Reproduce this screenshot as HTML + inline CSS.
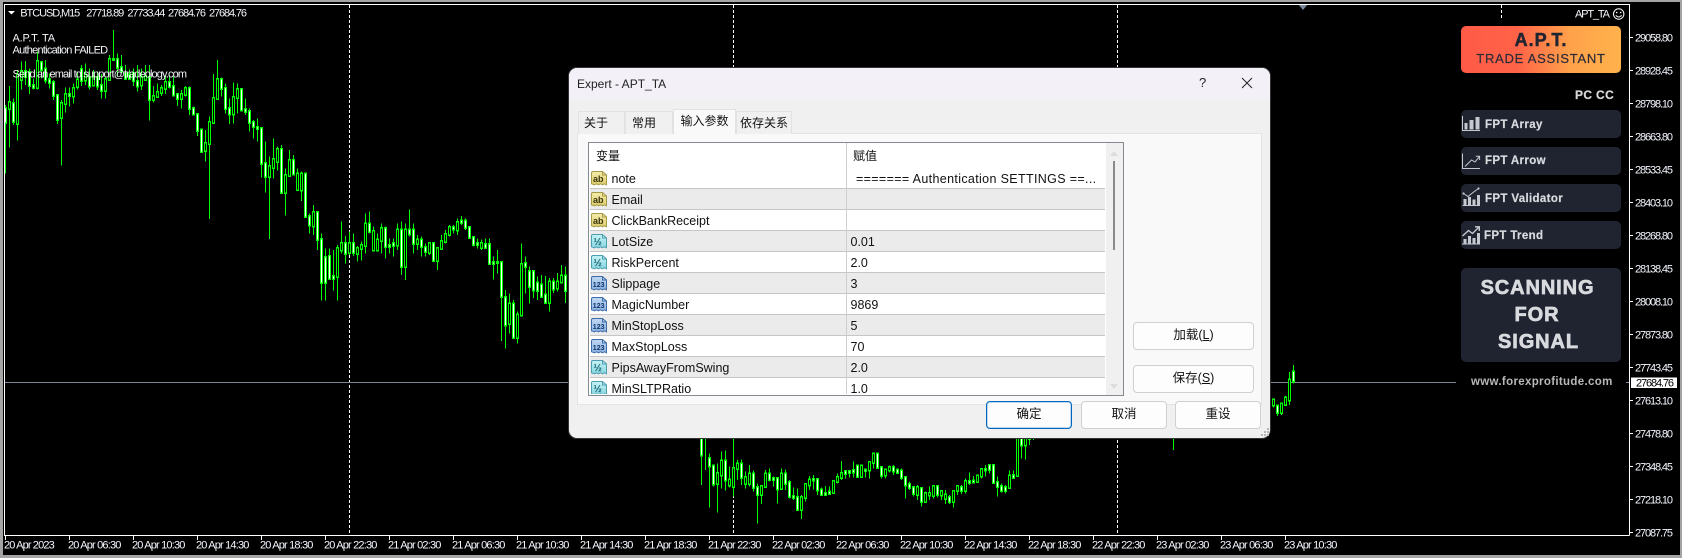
<!DOCTYPE html>
<html><head><meta charset="utf-8"><title>APT_TA</title>
<style>
html,body{margin:0;padding:0;background:#000;width:1682px;height:558px;overflow:hidden}
#r{position:relative;width:1682px;height:558px;overflow:hidden;background:#000;font-family:"Liberation Sans","Noto Sans CJK SC",sans-serif}
svg{display:block}
#c{position:absolute;left:0;top:0}
#c text{font-family:"Liberation Sans",sans-serif;font-size:11px}
.a{position:absolute;box-sizing:border-box}
.t{position:absolute;white-space:nowrap;line-height:16px;color:#111;font-size:12.5px}
.cj{font-size:12px}
#d{position:absolute;left:569px;top:68px;width:701px;height:370px;background:#f0f0f0;border-radius:8px;overflow:hidden;box-shadow:0 0 0 1px #333}
.tab{position:absolute;box-sizing:border-box;top:110.5px;height:23px;background:#f0f0f0;border:1px solid #e2e2e2;border-bottom:0;font-size:12px;color:#111;line-height:22px;padding-left:5px;white-space:nowrap}
.row{position:absolute;left:590px;width:515px;height:20px}
.g{background:#ebebeb}
.ln{position:absolute;left:590px;width:515px;height:1px;background:#c6c6c6}
.ic{position:absolute;left:591px;width:16px;height:15px}
.ic text{font-family:"Liberation Sans",sans-serif;font-size:9px;font-weight:bold}
.btn{position:absolute;box-sizing:border-box;background:#fdfdfd;border:1px solid #d0d0d0;border-radius:4px;text-align:center;font-size:12.5px;color:#111;line-height:25px}
.pn{position:absolute;left:1461px;width:160px;background:#1f2430;border-radius:5px}
.pt{position:absolute;white-space:nowrap;color:#d8dade;font-weight:bold;font-size:11.5px;letter-spacing:.35px;line-height:14px;-webkit-text-stroke:.2px #d8dade}
</style></head><body><div id="r">

<svg id="c" width="1682" height="558" viewBox="0 0 1682 558">
<defs>
<path id="w1" vector-effect="non-scaling-stroke" d="M0 325V368M2 310V365M5 215V230M6 218V257M7 257V262M9 187V208M10 207V240M11 238V248M12 248V287M13 287V358M16 283V287M19 208V242M21 232V258M23 232V258M24 256V272M27 178V179M28 178V203M29 203V213M30 222V235M31 225V235M32 220V242M33 245V258M36 232V298M41 248V260M42 260V285M43 284V296M46 265V325M47 325V342M48 344V392M49 390V455M54 238V265M55 265V325M56 325V342M59 268V330M60 328V334M61 334V368M62 368V380M63 382V386M64 385V490M65 490V530M69 448V578M72 482V522M75 522V650M76 650V675M78 637V718M79 718V848M80 772V848M81 770V835M82 830V835M85 730V760M87 730V758M91 672V695M95 685V740M96 737V740M97 730V737M99 690V800M101 690V702M102 690V730M104 720V740M105 742V755M107 730V782M112 682V687M114 663V667M115 663V683M116 683V712M117 712V733M118 731V733M120 733V742M121 733V790M122 787V790M123 787V788M124 787V890M125 892V975M127 912V1012M130 790V800M131 815V860M132 815V870M133 849V872M134 855V890M135 885V908M137 846V867M140 828V872"/>
<path id="b1" vector-effect="non-scaling-stroke" d="M1 308V325M3 225V370M4 215V238M8 185V262M14 310V352M15 283V310M17 265V288M18 240V260M20 225V240M22 232V255M25 238V272M26 178V238M34 232V255M35 230V238M37 290V298M38 278V290M39 265V278M40 248V265M44 284V296M45 265V284M50 430V452M51 368V430M52 295V368M53 238V295M57 292V342M58 268V292M66 500V530M67 478V503M68 448V485M70 526V578M71 482V526M73 522V568M74 522V570M77 637V678M83 745V830M84 730V750M86 730V758M88 745V760M89 737V745M90 672V737M92 695V750M93 720V750M94 685V722M98 690V735M100 690V800M103 720V730M106 730V758M108 745V782M109 725V745M110 703V725M111 682V703M113 667V690M119 731V742M126 912V970M128 945V1012M129 793V945M136 846V908M138 846V864M139 828V846"/>
<path id="w2" vector-effect="non-scaling-stroke" d="M0 113V165M2 175V198M3 198V252M6 183V240M10 192V232M13 222V262M14 262V283M17 222V238M18 235V238M19 235V267M21 222V250M22 248V290M23 290V292M24 292V328M28 238V240M29 238V270M30 270V283M31 280V283M32 276V280M36 215V220M37 215V217M38 212V216M39 198V230M41 210V211M44 162V203M45 203V227M48 203V213M49 210V218M50 213V232M51 233V255M52 253V262M53 262V280M55 265V305M59 260V283M62 293V305M65 262V272M67 245V248M68 243V246M71 208V210M72 197V208M73 197V248M74 248V260M75 260V272M76 262V272M78 227V232M80 113V135M82 113V115M144 18V37M148 -84V-57"/>
<path id="b2" vector-effect="non-scaling-stroke" d="M4 220V250M5 183V225M7 240V255M8 205V260M9 192V205M11 232V250M12 222V250M15 260V283M16 222V260M20 222V265M25 292V328M26 253V292M27 240V255M33 245V278M34 232V245M35 220V232M40 198V230M42 187V210M43 162V187M46 210V225M47 203V210M54 263V283M56 280V305M57 280V285M58 260V287M60 275V285M61 285V295M63 275V305M64 260V272M66 245V272M69 228V245M70 208V228M77 228V262M79 113V227M81 113V135M143 0V15M145 12V37M146 -6V14M147 -60V0"/>
</defs>

<rect width="1682" height="558" fill="#000"/>
<rect x="0" y="0" width="1682" height="2" fill="#a4a4a4"/>
<rect x="0" y="0" width="3" height="558" fill="#a4a4a4"/>
<rect x="0" y="555" width="1682" height="3" fill="#a4a4a4"/>
<rect x="1680" y="0" width="2" height="558" fill="#a4a4a4"/>

<g stroke="#fff" stroke-width="1" stroke-dasharray="3 2" fill="none" shape-rendering="crispEdges">
<path d="M349.5 5V535M733.5 5V535M1117.5 5V535M1501.5 5V19"/>
</g>
<path d="M5 382.5H1456M1626 382.5H1629" stroke="#778899" stroke-width="1" shape-rendering="crispEdges"/>

<g transform="translate(5.5,0) scale(4,.33333)" fill="none" shape-rendering="crispEdges">
<path vector-effect="non-scaling-stroke" stroke="#00ff00" stroke-width="1" d="M0 315V520M1 258V443M2 295V375M3 210V422M4 185V268M5 183V255M6 205V282M7 235V268M8 155V268M9 183V235M10 180V250M11 220V265M12 240V300M13 283V372M14 300V497M15 262V338M16 262V320M17 250V310M18 215V268M19 195V258M20 190V255M21 205V268M22 210V258M23 215V270M24 222V295M25 230V295M26 165V240M27 90V180M28 160V230M29 165V220M30 195V240M31 208V235M32 205V258M33 195V275M34 205V270M35 195V240M36 195V362M37 258V308M38 250V290M39 255V288M40 228V282M41 225V265M42 230V285M43 280V318M44 270V325M45 258V290M46 260V345M47 320V345M48 340V408M49 385V455M50 390V485M51 350V657M52 222V368M53 180V295M54 232V290M55 250V340M56 295V372M57 248V370M58 250V340M59 265V332M60 295V345M61 325V395M62 360V415M63 355V425M64 385V532M65 425V578M66 470V717M67 415V535M68 440V512M69 435V578M70 505V647M71 450V528M72 465V522M73 505V570M74 515V603M75 518V650M76 640V700M77 615V705M78 635V750M79 700V902M80 745V902M81 745V840M82 750V872M83 735V902M84 665V760M85 708V790M86 695V765M87 700V768M88 738V785M89 725V782M90 640V760M91 635V700M92 680V755M93 700V755M94 670V760M95 680V775M96 715V760M97 715V770M98 670V750M99 665V825M100 670V840M101 628V710M102 670V760M103 705V750M104 710V770M105 730V770M106 728V765M107 730V785M108 745V810M109 705V750M110 690V730M111 675V710M112 675V700M113 655V705M114 648V675M115 655V690M116 680V715M117 710V740M118 715V745M119 718V750M120 715V745M121 715V795M122 770V838M123 750V820M124 785V1023M125 870V1045M126 880V1000M127 900V1013M128 935V1030M129 730V948M130 770V880M131 800V910M132 810V894M133 830V900M134 825V894M135 828V909M136 834V935M137 834V879M138 819V875M139 795V849M140 800V909"/>
<use href="#w1" stroke="#00ff00" stroke-width="3" stroke-linecap="square"/>
<use href="#b1" stroke="#00ff00" stroke-width="3" stroke-linecap="square"/>
<use href="#w1" stroke="#ffffff" stroke-width="1"/>
<use href="#b1" stroke="#000000" stroke-width="1"/>
</g>

<g transform="translate(701.5,400) scale(4,.33333)" fill="none" shape-rendering="crispEdges">
<path vector-effect="non-scaling-stroke" stroke="#00ff00" stroke-width="1" d="M0 113V255M1 113V210M2 160V322M3 195V260M4 190V338M5 155V265M6 152V272M7 200V262M8 113V290M9 180V240M10 178V255M11 215V265M12 195V260M13 212V275M14 250V370M15 255V312M16 210V262M17 205V245M18 230V260M19 235V310M20 205V265M21 208V270M22 240V295M23 262V300M24 265V330M25 285V357M26 250V305M27 228V270M28 225V268M29 235V285M30 262V288M31 258V288M32 260V285M33 240V280M34 220V250M35 183V240M36 210V235M37 210V232M38 185V232M39 195V230M40 195V232M41 205V232M42 185V235M43 160V205M44 162V205M45 200V235M46 205V235M47 197V218M48 195V225M49 205V222M50 205V240M51 228V295M52 245V270M53 258V290M54 255V300M55 262V320M56 275V308M57 260V300M58 255V295M59 255V292M60 270V300M61 270V312M62 285V312M63 270V323M64 255V285M65 255V282M66 235V280M67 218V255M68 228V250M69 225V245M70 205V235M71 195V230M72 195V220M73 195V250M74 230V290M75 250V278M76 255V280M77 212V265M78 212V235M79 113V228M80 113V175M81 113V178M82 113V135M83 113V120M118 113V150M143 0V22M144 15V48M145 10V45M146 -12V15M147 -84V15M148 -105V-50"/>
<use href="#w2" stroke="#00ff00" stroke-width="3" stroke-linecap="square"/>
<use href="#b2" stroke="#00ff00" stroke-width="3" stroke-linecap="square"/>
<use href="#w2" stroke="#ffffff" stroke-width="1"/>
<use href="#b2" stroke="#000000" stroke-width="1"/>
</g>

<path d="M1298 4H1308L1303 10Z" fill="#778899"/>

<g shape-rendering="crispEdges" fill="none" stroke="#fff" stroke-width="1">
<path d="M4.5 4.5H1629.5M4.5 4V535.5M4 535.5H1629.5M1629.5 4V535.5"/>
<path d="M1630 37.5H1633M1630 70.5H1633M1630 103.5H1633M1630 136.5H1633M1630 169.5H1633M1630 202.5H1633M1630 235.5H1633M1630 268.5H1633M1630 301.5H1633M1630 334.5H1633M1630 367.5H1633M1630 400.5H1633M1630 433.5H1633M1630 466.5H1633M1630 499.5H1633M1630 532.5H1633"/>
<path d="M5.5 536V540M69.5 536V540M133.5 536V540M197.5 536V540M261.5 536V540M325.5 536V540M389.5 536V540M453.5 536V540M517.5 536V540M581.5 536V540M645.5 536V540M709.5 536V540M773.5 536V540M837.5 536V540M901.5 536V540M965.5 536V540M1029.5 536V540M1093.5 536V540M1157.5 536V540M1221.5 536V540M1285.5 536V540"/>
</g>

<path d="M8 11H15L11.5 14.5Z" fill="#fff"/>
<g fill="#f4f6fa">
<text x="20.3" y="16.5" textLength="60">BTCUSD,M15</text>
<text x="86.2" y="16.5" textLength="38">27718.89</text>
<text x="127.4" y="16.5" textLength="38">27733.44</text>
<text x="168" y="16.5" textLength="38">27684.76</text>
<text x="209" y="16.5" textLength="38">27684.76</text>
<text x="12.5" y="41.5" textLength="42.6">A.P.T. TA</text>
<text x="12.5" y="53.5" textLength="95.6">Authentication FAILED</text>
<text x="12.5" y="77.5" textLength="174.5">Send an email to support@tradeology.com</text>
<text x="1575" y="17.5" textLength="35">APT_TA</text>
</g>
<circle cx="1618.7" cy="14" r="5.2" fill="none" stroke="#fff" stroke-width="1"/>
<circle cx="1616.7" cy="12.5" r=".8" fill="#fff"/><circle cx="1620.7" cy="12.5" r=".8" fill="#fff"/>
<path d="M1615.8 15.3Q1618.7 18.8 1621.6 15.3" fill="none" stroke="#fff" stroke-width=".9"/>

<g fill="#f4f8ff">
<text x="1635" y="41.5" textLength="38">29058.80</text>
<text x="1635" y="74.5" textLength="38">28928.45</text>
<text x="1635" y="107.5" textLength="38">28798.10</text>
<text x="1635" y="140.5" textLength="38">28663.80</text>
<text x="1635" y="173.5" textLength="38">28533.45</text>
<text x="1635" y="206.5" textLength="38">28403.10</text>
<text x="1635" y="239.5" textLength="38">28268.80</text>
<text x="1635" y="272.5" textLength="38">28138.45</text>
<text x="1635" y="305.5" textLength="38">28008.10</text>
<text x="1635" y="338.5" textLength="38">27873.80</text>
<text x="1635" y="371.5" textLength="38">27743.45</text>
<text x="1635" y="404.5" textLength="38">27613.10</text>
<text x="1635" y="437.5" textLength="38">27478.80</text>
<text x="1635" y="470.5" textLength="38">27348.45</text>
<text x="1635" y="503.5" textLength="38">27218.10</text>
<text x="1635" y="536.5" textLength="38">27087.75</text>
</g>
<rect x="1631" y="377.5" width="46" height="10.5" fill="#fff"/>
<text x="1636" y="386.5" textLength="38" fill="#000">27684.76</text>

<g fill="#f4f8ff">
<text x="4" y="548.5" textLength="50.7">20 Apr 2023</text>
<text x="68" y="548.5" textLength="53.4">20 Apr 06:30</text>
<text x="132" y="548.5" textLength="53.4">20 Apr 10:30</text>
<text x="196" y="548.5" textLength="53.4">20 Apr 14:30</text>
<text x="260" y="548.5" textLength="53.4">20 Apr 18:30</text>
<text x="324" y="548.5" textLength="53.4">20 Apr 22:30</text>
<text x="388" y="548.5" textLength="53.4">21 Apr 02:30</text>
<text x="452" y="548.5" textLength="53.4">21 Apr 06:30</text>
<text x="516" y="548.5" textLength="53.4">21 Apr 10:30</text>
<text x="580" y="548.5" textLength="53.4">21 Apr 14:30</text>
<text x="644" y="548.5" textLength="53.4">21 Apr 18:30</text>
<text x="708" y="548.5" textLength="53.4">21 Apr 22:30</text>
<text x="772" y="548.5" textLength="53.4">22 Apr 02:30</text>
<text x="836" y="548.5" textLength="53.4">22 Apr 06:30</text>
<text x="900" y="548.5" textLength="53.4">22 Apr 10:30</text>
<text x="964" y="548.5" textLength="53.4">22 Apr 14:30</text>
<text x="1028" y="548.5" textLength="53.4">22 Apr 18:30</text>
<text x="1092" y="548.5" textLength="53.4">22 Apr 22:30</text>
<text x="1156" y="548.5" textLength="53.4">23 Apr 02:30</text>
<text x="1220" y="548.5" textLength="53.4">23 Apr 06:30</text>
<text x="1284" y="548.5" textLength="53.4">23 Apr 10:30</text>
</g>
</svg>

<!-- right panel -->
<div class="a" style="left:1461px;top:26px;width:160px;height:47px;border-radius:5px;background:linear-gradient(90deg,#ff5a47 0%,#ff6347 35%,#ffa14a 68%,#ffb24c 100%)"></div>
<div class="t" style="left:1461px;width:160px;text-align:center;top:31px;font-size:18px;line-height:18px;font-weight:bold;color:#1f2430;letter-spacing:1px;-webkit-text-stroke:.5px #1f2430">A.P.T.</div>
<div class="t" style="left:1461px;width:160px;text-align:center;top:51px;font-size:13px;line-height:15px;color:#2a2c38;letter-spacing:.75px;-webkit-text-stroke:.2px #2a2c38">TRADE ASSISTANT</div>
<div class="t" style="left:1575px;top:88px;font-size:12px;line-height:14px;font-weight:bold;color:#d8d8d8;letter-spacing:.35px;-webkit-text-stroke:.2px #d8d8d8">PC CC</div>

<div class="pn" style="top:110px;height:28px"></div>
<div class="pn" style="top:147px;height:28px"></div>
<div class="pn" style="top:184px;height:28px"></div>
<div class="pn" style="top:221px;height:28px"></div>
<div class="pn" style="top:268px;height:94px"></div>

<svg class="a" style="left:0;top:0" width="1682" height="558" viewBox="0 0 1682 558" fill="none" stroke="#c6cad0">
<path d="M1462.5 116V130.5H1480" stroke-width="1"/>
<path d="M1464.5 123h3v6.5h-3zM1469.5 120h4v9.5h-4zM1475.5 117h4v12.5h-4z" fill="#c6cad0" stroke="none"/>
<path d="M1462.5 153.5V168.5H1480" stroke-width="1"/>
<path d="M1465 166.5L1471.5 160L1475 162L1479.5 156.5M1475.8 156.3H1479.6V160" stroke-width="1"/>
<path d="M1462.5 205.5H1480" stroke-width="1"/>
<path d="M1463.5 199h3v6h-3zM1468 197h3v8h-3zM1472.5 199.5h3v5.5h-3zM1477 195h3v10h-3z" fill="#c6cad0" stroke="none"/>
<path d="M1463.5 193.5L1468 196.5L1473 192.5L1478.5 188.5" stroke-width="1"/>
<circle cx="1478.5" cy="188.5" r="1.1" fill="#c6cad0" stroke="none"/><circle cx="1463.5" cy="193.5" r="1.1" fill="#c6cad0" stroke="none"/>
<path d="M1462 244h18" stroke-width="1"/>
<path d="M1463.5 239h3v5h-3zM1468 236h3v8h-3zM1472.5 238h3v6h-3zM1477 233h3v11h-3z" fill="#c6cad0" stroke="none"/>
<path d="M1462.5 236L1468.5 230.5L1472.5 233.5L1479 227M1475 226.8H1479.3V231" stroke-width="1.4"/>
</svg>

<div class="pt" style="left:1485px;top:118px">FPT Array</div>
<div class="pt" style="left:1485px;top:154px">FPT Arrow</div>
<div class="pt" style="left:1485px;top:192px">FPT Validator</div>
<div class="pt" style="left:1484px;top:228.5px">FPT Trend</div>

<div class="t" style="left:1461px;width:153px;text-align:center;top:276px;font-size:20px;line-height:24px;font-weight:bold;color:#d8dade;letter-spacing:.9px;-webkit-text-stroke:.7px #d8dade">SCANNING</div>
<div class="t" style="left:1461px;width:152px;text-align:center;top:303px;font-size:20px;line-height:24px;font-weight:bold;color:#d8dade;letter-spacing:.9px;-webkit-text-stroke:.7px #d8dade">FOR</div>
<div class="t" style="left:1461px;width:155px;text-align:center;top:330px;font-size:20px;line-height:24px;font-weight:bold;color:#d8dade;letter-spacing:.9px;-webkit-text-stroke:.7px #d8dade">SIGNAL</div>
<div class="t" style="left:1471px;top:375px;font-size:11.5px;line-height:14px;color:#b8b8b8;letter-spacing:.33px;font-weight:bold">www.forexprofitude.com</div>

<!-- dialog -->
<div id="d">
<div class="a" style="left:0;top:0;width:701px;height:31px;background:#f3f1f7"></div>
</div>
<div class="t" style="left:577px;top:76px;font-size:12px;color:#222">Expert - APT_TA</div>
<div class="t" style="left:1199px;top:75px;font-size:13px;color:#222">?</div>
<svg class="a" style="left:1241px;top:77px" width="12" height="12" fill="none" stroke="#222" stroke-width="1"><path d="M1 1L11 11M11 1L1 11"/></svg>

<div class="a" style="left:577px;top:133px;width:685px;height:272px;background:#f9f9f9;border:1px solid #e4e4e4"></div>
<div class="tab" style="left:578px;width:47px">关于</div>
<div class="tab" style="left:625px;width:47.5px;padding-left:6px">常用</div>
<div class="tab" style="left:736px;width:56px;padding-left:3px">依存关系</div>
<div class="tab" style="left:672.5px;top:108.5px;height:25.5px;width:63px;background:#f9f9f9;padding-left:7px;line-height:22px">输入参数</div>

<div class="a" style="left:588px;top:142px;width:536px;height:254px;background:#fff;border:1px solid #858a90"></div>
<div class="a" style="left:1106px;top:143px;width:17px;height:252px;background:#f0f0f0"></div>
<div class="a" style="left:1113px;top:161px;width:2px;height:89px;background:#8a8a8a"></div>
<svg class="a" style="left:1109px;top:150px" width="10" height="7"><path d="M5 1L9 6H1Z" fill="#dcdcdc"/></svg>

<div class="row g" style="top:189px"></div>
<div class="row g" style="top:231px"></div>
<div class="row g" style="top:273px"></div>
<div class="row g" style="top:315px"></div>
<div class="row g" style="top:357px"></div>
<div class="ln" style="top:188px"></div><div class="ln" style="top:209px"></div><div class="ln" style="top:230px"></div><div class="ln" style="top:251px"></div><div class="ln" style="top:272px"></div><div class="ln" style="top:293px"></div><div class="ln" style="top:314px"></div><div class="ln" style="top:335px"></div><div class="ln" style="top:356px"></div><div class="ln" style="top:377px"></div>
<div class="a" style="left:846px;top:143px;width:1px;height:251px;background:#cfcfcf"></div>

<div class="t cj" style="left:596px;top:148px">变量</div>
<div class="t cj" style="left:853px;top:148px">赋值</div>

<svg width="0" height="0" style="position:absolute">
<defs>
<linearGradient id="gy" x1="0" y1="0" x2="0" y2="1"><stop offset="0" stop-color="#f5ecaa"/><stop offset="1" stop-color="#dccd6c"/></linearGradient>
<linearGradient id="gc" x1="0" y1="0" x2="0" y2="1"><stop offset="0" stop-color="#c6f2f4"/><stop offset="1" stop-color="#88d6e2"/></linearGradient>
<linearGradient id="gb" x1="0" y1="0" x2="0" y2="1"><stop offset="0" stop-color="#c0d8f2"/><stop offset="1" stop-color="#8cb2e2"/></linearGradient>
<path id="ish" d="M.5 2Q.5 .5 2 .5H11.5L15.5 4V13.8L13.5 12.8L11.5 13.8L9.5 12.8L7.5 13.8L5.5 12.8L3.5 13.8L.5 12.8Z"/>
</defs></svg>

<svg class="ic" style="top:171px" viewBox="0 0 16 15"><use href="#ish" fill="url(#gy)" stroke="#a69a48"/><path d="M11.5 .5V4H15.5" fill="none" stroke="#a69a48"/><text x="2" y="10.8" fill="#3a3410">ab</text></svg>
<svg class="ic" style="top:192px" viewBox="0 0 16 15"><use href="#ish" fill="url(#gy)" stroke="#a69a48"/><path d="M11.5 .5V4H15.5" fill="none" stroke="#a69a48"/><text x="2" y="10.8" fill="#3a3410">ab</text></svg>
<svg class="ic" style="top:213px" viewBox="0 0 16 15"><use href="#ish" fill="url(#gy)" stroke="#a69a48"/><path d="M11.5 .5V4H15.5" fill="none" stroke="#a69a48"/><text x="2" y="10.8" fill="#3a3410">ab</text></svg>
<svg class="ic" style="top:234px" viewBox="0 0 16 15"><use href="#ish" fill="url(#gc)" stroke="#4c9eb0"/><path d="M11.5 .5V4H15.5" fill="none" stroke="#4c9eb0"/><text x="2.5" y="10.8" fill="#14606e" style="font-size:10px">½</text></svg>
<svg class="ic" style="top:255px" viewBox="0 0 16 15"><use href="#ish" fill="url(#gc)" stroke="#4c9eb0"/><path d="M11.5 .5V4H15.5" fill="none" stroke="#4c9eb0"/><text x="2.5" y="10.8" fill="#14606e" style="font-size:10px">½</text></svg>
<svg class="ic" style="top:276px" viewBox="0 0 16 15"><use href="#ish" fill="url(#gb)" stroke="#3e6ca8"/><path d="M11.5 .5V4H15.5" fill="none" stroke="#3e6ca8"/><text x="1.8" y="10.8" fill="#0f3468" style="font-size:7px">123</text></svg>
<svg class="ic" style="top:297px" viewBox="0 0 16 15"><use href="#ish" fill="url(#gb)" stroke="#3e6ca8"/><path d="M11.5 .5V4H15.5" fill="none" stroke="#3e6ca8"/><text x="1.8" y="10.8" fill="#0f3468" style="font-size:7px">123</text></svg>
<svg class="ic" style="top:318px" viewBox="0 0 16 15"><use href="#ish" fill="url(#gb)" stroke="#3e6ca8"/><path d="M11.5 .5V4H15.5" fill="none" stroke="#3e6ca8"/><text x="1.8" y="10.8" fill="#0f3468" style="font-size:7px">123</text></svg>
<svg class="ic" style="top:339px" viewBox="0 0 16 15"><use href="#ish" fill="url(#gb)" stroke="#3e6ca8"/><path d="M11.5 .5V4H15.5" fill="none" stroke="#3e6ca8"/><text x="1.8" y="10.8" fill="#0f3468" style="font-size:7px">123</text></svg>
<svg class="ic" style="top:360px" viewBox="0 0 16 15"><use href="#ish" fill="url(#gc)" stroke="#4c9eb0"/><path d="M11.5 .5V4H15.5" fill="none" stroke="#4c9eb0"/><text x="2.5" y="10.8" fill="#14606e" style="font-size:10px">½</text></svg>
<svg class="ic" style="top:381px;height:13px" viewBox="0 0 16 13"><use href="#ish" fill="url(#gc)" stroke="#4c9eb0"/><path d="M11.5 .5V4H15.5" fill="none" stroke="#4c9eb0"/><text x="2.5" y="10.8" fill="#14606e" style="font-size:10px">½</text></svg>

<div class="t" style="left:611.5px;top:171px">note</div>
<div class="t" style="left:611.5px;top:192px">Email</div>
<div class="t" style="left:611.5px;top:213px">ClickBankReceipt</div>
<div class="t" style="left:611.5px;top:234px">LotSize</div>
<div class="t" style="left:611.5px;top:255px">RiskPercent</div>
<div class="t" style="left:611.5px;top:276px">Slippage</div>
<div class="t" style="left:611.5px;top:297px">MagicNumber</div>
<div class="t" style="left:611.5px;top:318px">MinStopLoss</div>
<div class="t" style="left:611.5px;top:339px">MaxStopLoss</div>
<div class="t" style="left:611.5px;top:360px">PipsAwayFromSwing</div>
<div class="t" style="left:850.5px;top:171px;width:246px;text-align:right;letter-spacing:.35px">======= Authentication SETTINGS ==...</div>
<div class="t" style="left:850.5px;top:234px">0.01</div>
<div class="t" style="left:850.5px;top:255px">2.0</div>
<div class="t" style="left:850.5px;top:276px">3</div>
<div class="t" style="left:850.5px;top:297px">9869</div>
<div class="t" style="left:850.5px;top:318px">5</div>
<div class="t" style="left:850.5px;top:339px">70</div>
<div class="t" style="left:850.5px;top:360px">2.0</div>
<div class="a" style="left:589px;top:378px;width:517px;height:16px;overflow:hidden">
<div class="t" style="left:22.5px;top:3px">MinSLTPRatio</div>
<div class="t" style="left:261.5px;top:3px">1.0</div>
</div>
<svg class="a" style="left:1109px;top:383px" width="10" height="7"><path d="M5 6L9 1H1Z" fill="#dcdcdc"/></svg>

<div class="btn" style="left:1133px;top:322px;width:121px;height:28px">加载(<u>L</u>)</div>
<div class="btn" style="left:1133px;top:365px;width:121px;height:28px">保存(<u>S</u>)</div>
<div class="btn" style="left:986px;top:401px;width:86px;height:28px;border:1px solid #0067c0;box-shadow:inset 0 0 0 1px rgba(0,103,192,.25);line-height:25px">确定</div>
<div class="btn" style="left:1081px;top:401px;width:86px;height:28px">取消</div>
<div class="btn" style="left:1175px;top:401px;width:86px;height:28px">重设</div>

<svg class="a" style="left:1260px;top:428px" width="10" height="9" fill="#b4b4b4"><path d="M7 0h2v2H7zM4 3h2v2H4zM7 3h2v2H7zM1 6h2v2H1zM4 6h2v2H4zM7 6h2v2H7z"/></svg>

</div></body></html>
